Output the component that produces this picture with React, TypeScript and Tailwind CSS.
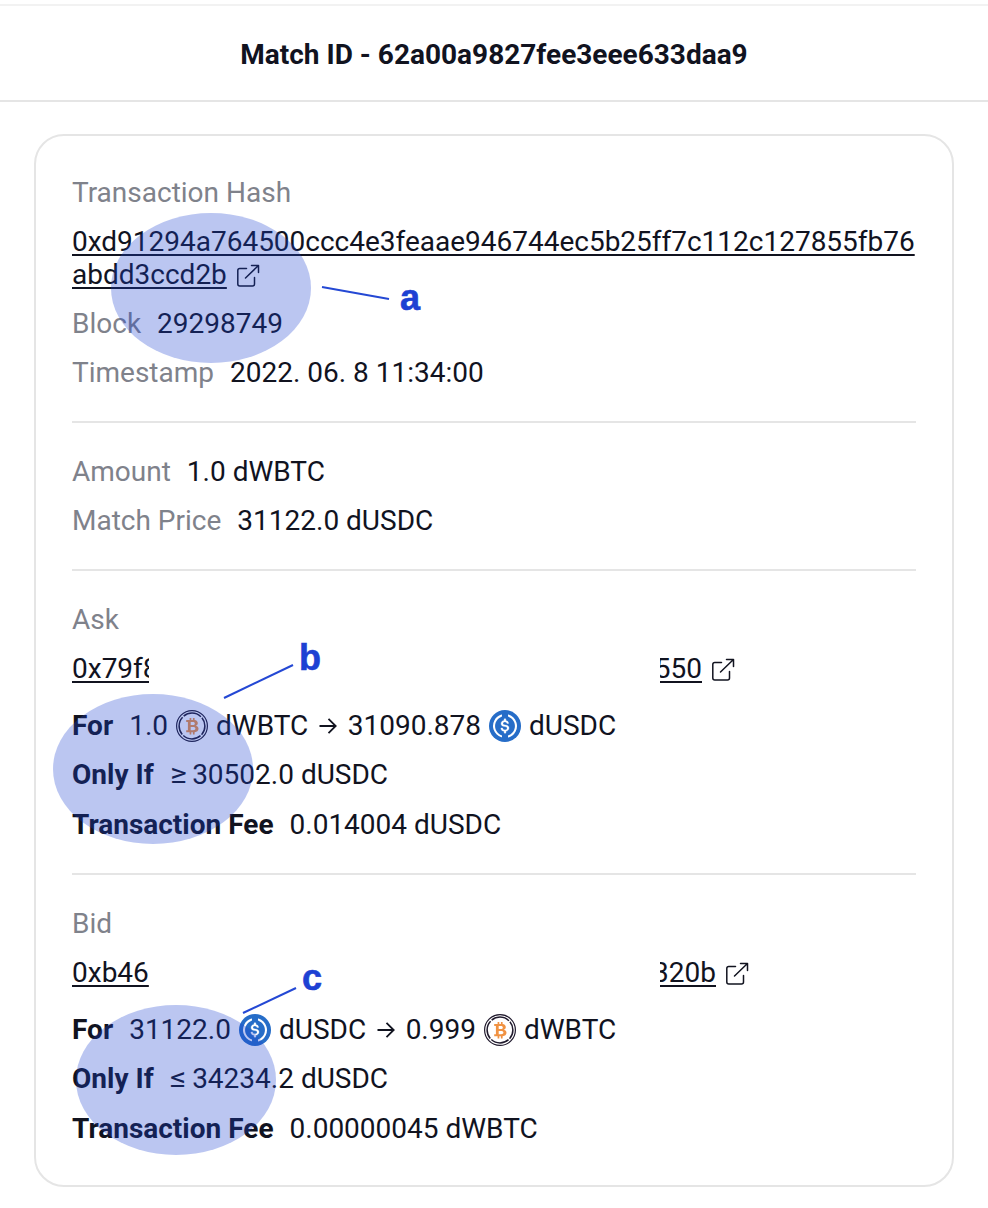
import type { ReactNode } from "react";

function ExternalIcon() {
  return (
    <svg width="24" height="24" viewBox="0 0 24 24" fill="none" stroke="#11131f" strokeWidth="1.5" strokeLinecap="round" strokeLinejoin="round" className="shrink-0">
      <path d="M10.500 4.500H3.800a2 2 0 0 0-2 2v13.500a2 2 0 0 0 2 2h12.700a2 2 0 0 0 2-2v-6.500" />
      <path d="M15.500 1.500H22.500V8.500M22.200 1.800 9.500 14" />
    </svg>
  );
}

function Wbtc() {
  return (
    <svg width="32" height="32" viewBox="0 0 32 32" fill="none" className="shrink-0">
      <circle cx="16" cy="16" r="15.400" stroke="#201a2d" strokeWidth="1.200" />
      <circle cx="16" cy="16" r="12.900" stroke="#201a2d" strokeWidth="1.500" strokeDasharray="18.800 1.460" strokeDashoffset="9.400" />
      <path
        d="M10.200 10h3.400V8h1.700v2h1.600V8h1.700v2.100c2 .3 3.200 1.400 3.200 3 0 1.300-.7 2.200-1.900 2.700 1.600.4 2.600 1.400 2.600 3 0 2-1.500 3.200-3.900 3.400V24.500h-1.700v-2.300h-1.600v2.300h-1.700v-2.300h-3.400v-2h1.700V12h-1.700zM14.700 12v3h2.100c1.300 0 2-.5 2-1.500s-.7-1.500-2-1.500zM14.700 17v3.200h2.400c1.500 0 2.300-.5 2.300-1.600s-.8-1.600-2.300-1.600z"
        fill="#f09242"
        fillRule="evenodd"
      />
    </svg>
  );
}

function Usdc() {
  return (
    <svg width="32" height="32" viewBox="0 0 32 32" className="shrink-0">
      <circle cx="16" cy="16" r="16" fill="#266dc8" />
      <g fill="#fff">
        <path d="M20.022 18.124c0-2.124-1.280-2.852-3.840-3.156-1.828-.243-2.193-.728-2.193-1.578 0-.850.610-1.396 1.828-1.396 1.097 0 1.707.364 2.011 1.275a.458.458 0 0 0 .427.303h.975a.416.416 0 0 0 .427-.425v-.060a3.040 3.040 0 0 0-2.743-2.489V9.142c0-.243-.183-.425-.487-.486h-.915c-.243 0-.426.182-.487.486v1.396c-1.829.242-2.986 1.456-2.986 2.974 0 2.002 1.218 2.791 3.778 3.095 1.707.303 2.255.668 2.255 1.639 0 .970-.853 1.638-2.011 1.638-1.585 0-2.133-.667-2.316-1.578-.060-.242-.244-.364-.427-.364h-1.036a.416.416 0 0 0-.426.425v.060c.243 1.518 1.219 2.610 3.230 2.914v1.457c0 .242.183.425.487.485h.915c.243 0 .426-.182.487-.485V21.340c1.829-.303 3.047-1.578 3.047-3.217z" stroke="#fff" strokeWidth="0.300" />
        <path transform="translate(-1.440 -1.440) scale(1.090)" d="M12.892 24.497c-4.754-1.700-7.192-6.980-5.424-11.653.914-2.550 2.925-4.491 5.424-5.402.244-.121.365-.303.365-.607v-.850c0-.242-.121-.424-.365-.485-.061 0-.183 0-.244.060a10.895 10.895 0 0 0-7.130 13.717c1.096 3.400 3.717 6.010 7.130 7.102.244.121.488 0 .548-.243.061-.060.061-.122.061-.243v-.850c0-.182-.182-.424-.365-.546zm6.460-18.936c-.244-.122-.488 0-.548.242-.061.061-.061.122-.061.243v.850c0 .243.182.485.365.607 4.754 1.700 7.192 6.980 5.424 11.653-.914 2.550-2.925 4.491-5.424 5.402-.244.121-.365.303-.365.607v.850c0 .242.121.424.365.485.061 0 .183 0 .244-.060a10.895 10.895 0 0 0 7.130-13.717c-1.096-3.460-3.778-6.070-7.130-7.162z" />
      </g>
    </svg>
  );
}

function Arrow() {
  return (
    <svg width="18" height="18" viewBox="0 0 18 18" fill="none" stroke="#11131f" strokeWidth="1.8" className="ml-[11px] mr-[10.5px] shrink-0">
      <path d="M.500 9h16M9.500 1.800 16.700 9l-7.200 7.200" />
    </svg>
  );
}

function Compare({ sign }: { sign: string }) {
  return <span className="mb-[3px] w-[15.5px] origin-left scale-x-115">{sign}</span>;
}

function Field({ label, strong, children }: { label: string; strong?: boolean; children: ReactNode }) {
  return (
    <div className="flex h-[33px] items-center whitespace-pre">
      <span className={strong ? "mr-4 font-bold" : "mr-4 text-[#7f828b]"}>{label}</span>
      {children}
    </div>
  );
}

function Address({ start, end, endWidth }: { start: string; end: string; endWidth: string }) {
  return (
    <div className="mt-4 flex h-[33px] items-center">
      <span className="w-[77px] overflow-hidden underline decoration-2 underline-offset-3">{start}</span>
      <span className={`ml-[511px] flex justify-end overflow-hidden underline decoration-2 underline-offset-3 ${endWidth}`}>
        <span>{end}</span>
      </span>
      <span className="ml-[9px] mt-0.5"><ExternalIcon /></span>
    </div>
  );
}

function Divider() {
  return <hr className="my-8 border-t-2 border-[#e5e5e5]" />;
}

function Callout({ letter, ellipse, line, mark }: { letter: string; ellipse: string; line: [number, number, number, number]; mark: string }) {
  return (
    <>
      <div className={`pointer-events-none absolute h-[150px] w-[200px] rounded-[50%] bg-[#1d41cf]/30 ${ellipse}`} />
      <svg className="pointer-events-none absolute left-0 top-0" width="988" height="1208">
        <line x1={line[0]} y1={line[1]} x2={line[2]} y2={line[3]} stroke="#2448d4" strokeWidth="2" />
      </svg>
      <span className={`absolute font-['Liberation_Sans',sans-serif] text-[36px] font-bold leading-[40px] text-[#1d41d3] [-webkit-text-stroke:0.6px_#1d41d3] ${mark}`}>{letter}</span>
    </>
  );
}

export default function App() {
  return (
    <div className="relative h-[1208px] w-[988px] overflow-hidden bg-white font-[Roboto,sans-serif] text-[28px] leading-[33px] text-[#11131f]">
      <header className="mt-1 flex h-[98px] items-center justify-center border-y-2 border-t-[#f2f2f2] border-b-[#e5e5e5]">
        <h1 className="pt-0.5 font-bold">Match ID - 62a00a9827fee3eee633daa9</h1>
      </header>
      <main className="mx-[34px] mt-8 h-[1053px] rounded-[30px] border-2 border-[#e5e5e5] px-9 pt-10">
        <section>
          <div className="text-[#7f828b]">Transaction Hash</div>
          <div className="mt-4">
            <div className="tracking-[-0.01px] underline decoration-2 underline-offset-3">0xd91294a764500ccc4e3feaae946744ec5b25ff7c112c127855fb76</div>
            <div className="flex h-[33px] items-center">
              <span className="underline decoration-2 underline-offset-3">abdd3ccd2b</span>
              <span className="ml-[9px] mt-0.5"><ExternalIcon /></span>
            </div>
          </div>
          <div className="mt-4 flex flex-col gap-4">
            <Field label="Block">29298749</Field>
            <Field label="Timestamp">2022. 06. 8 11:34:00</Field>
          </div>
        </section>
        <Divider />
        <section className="flex flex-col gap-4">
          <Field label="Amount">1.0 dWBTC</Field>
          <Field label="Match Price">31122.0 dUSDC</Field>
        </section>
        <Divider />
        <section>
          <div className="text-[#7f828b]">Ask</div>
          <Address start="0x79f8" end="550" endWidth="w-[42px]" />
          <div className="mt-6 flex flex-col gap-4">
            <Field label="For" strong>
              1.0<span className="mx-2"><Wbtc /></span>dWBTC<Arrow />31090.878<span className="mx-2"><Usdc /></span>dUSDC
            </Field>
            <Field label="Only If" strong><Compare sign="≥" /> 30502.0 dUSDC</Field>
            <div className="pt-px">
              <Field label="Transaction Fee" strong>0.014004 dUSDC</Field>
            </div>
          </div>
        </section>
        <Divider />
        <section>
          <div className="text-[#7f828b]">Bid</div>
          <Address start="0xb46" end="320b" endWidth="w-[56px]" />
          <div className="mt-6 flex flex-col gap-4">
            <Field label="For" strong>
              31122.0<span className="mx-2"><Usdc /></span>dUSDC<Arrow />0.999<span className="mx-2"><Wbtc /></span>dWBTC
            </Field>
            <Field label="Only If" strong><Compare sign="≤" /> 34234.2 dUSDC</Field>
            <div className="pt-px">
              <Field label="Transaction Fee" strong>0.00000045 dWBTC</Field>
            </div>
          </div>
        </section>
      </main>
      <Callout letter="a" ellipse="left-[111px] top-[213px]" line={[322, 287, 389, 299]} mark="left-[400px] top-[278px]" />
      <Callout letter="b" ellipse="left-[53px] top-[694px]" line={[224, 698, 293, 665]} mark="left-[299px] top-[638px]" />
      <Callout letter="c" ellipse="left-[76px] top-[1005px]" line={[243, 1013, 296, 988]} mark="left-[302px] top-[958px]" />
    </div>
  );
}
